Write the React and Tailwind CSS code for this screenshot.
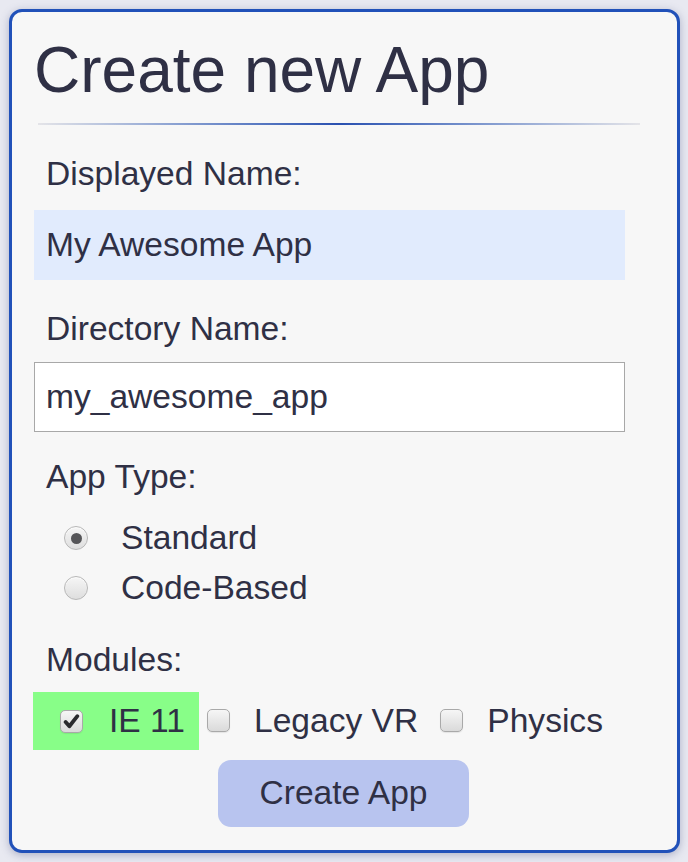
import React from "react";

function Radio({ checked }) {
  return (
    <span className="relative flex h-[24px] w-[24px] items-center justify-center rounded-full border border-[#b8b8b8] bg-gradient-to-b from-[#f6f6f6] to-[#dedede] shadow-[inset_0_1px_1px_rgba(255,255,255,0.8)]">
      {checked && <span className="h-[11px] w-[11px] rounded-full bg-[#555558]" />}
    </span>
  );
}

function Check({ checked }) {
  return (
    <span className="flex h-[23px] w-[23px] shrink-0 items-center justify-center rounded-[5px] border border-[#a9a9a9] bg-gradient-to-b from-[#f6f6f6] to-[#dadada] shadow-[0_1px_1px_rgba(0,0,0,0.08)]">
      {checked && (
        <svg width="17" height="17" viewBox="0 0 16 16">
          <path d="M2.5 8.5 L6 12.5 L13.5 3" fill="none" stroke="#2a2a2e" strokeWidth="3.6" strokeLinecap="round" strokeLinejoin="round" />
        </svg>
      )}
    </span>
  );
}

export default function App() {
  return (
    <div className="h-[862px] w-[688px] bg-[#e8e9f1] pl-[9px] pt-[9px] font-['Liberation_Sans',Arial,sans-serif] text-[#2f3045]">
      <div className="h-[844px] w-[671px] rounded-[13px] border-[3px] border-[#2151b9] bg-[#f7f7f7] shadow-[0_2px_8px_rgba(60,70,120,0.35)]">
        <div className="pt-[22px]">
          <h1 className="ml-[22px] text-[64px] leading-[72px]">Create new App</h1>
          <div className="ml-[26px] mt-[17px] h-[2px] w-[602px] bg-gradient-to-r from-[#e4e4e8] via-[#2a50b0] to-[#e4e4e8]" />
          <div className="ml-[34px] mt-[30px] text-[33.6px] leading-[38px]">Displayed Name:</div>
          <div className="ml-[22px] mt-[17px] flex h-[70px] w-[591px] items-center bg-[#e1ebfd] pl-[12px] text-[33.6px]">My Awesome App</div>
          <div className="ml-[34px] mt-[30px] text-[33.6px] leading-[38px]">Directory Name:</div>
          <div className="ml-[22px] mt-[14px] flex h-[70px] w-[591px] items-center border border-[#a8a8a8] bg-white pl-[11px] text-[33.6px]">my_awesome_app</div>
          <div className="ml-[34px] mt-[26px] text-[33.6px] leading-[38px]">App Type:</div>
          <div className="mt-[17px]">
            <div className="flex h-[50px] items-center pl-[52px] text-[33.6px]">
              <Radio checked />
              <span className="ml-[33px]">Standard</span>
            </div>
            <div className="flex h-[50px] items-center pl-[52px] text-[33.6px]">
              <Radio />
              <span className="ml-[33px]">Code-Based</span>
            </div>
          </div>
          <div className="ml-[34px] mt-[28px] text-[33.6px] leading-[38px]">Modules:</div>
          <div className="ml-[21px] mt-[13px] flex h-[58px] items-center text-[33.6px]">
            <div className="flex h-[58px] w-[166px] items-center bg-[#88fe88] pl-[27px]">
              <Check checked />
              <span className="ml-[26px]">IE 11</span>
            </div>
            <div className="ml-[8px] flex items-center">
              <Check />
              <span className="ml-[24px]">Legacy VR</span>
            </div>
            <div className="ml-[22px] flex items-center">
              <Check />
              <span className="ml-[24px]">Physics</span>
            </div>
          </div>
          <div className="mt-[10px] flex justify-center pr-[10px]">
            <div className="ml-[8px] flex h-[67px] w-[251px] items-center justify-center rounded-[13px] bg-[#b8c4ef] text-[33.6px]">
              Create App
            </div>
          </div>
        </div>
      </div>
    </div>
  );
}
